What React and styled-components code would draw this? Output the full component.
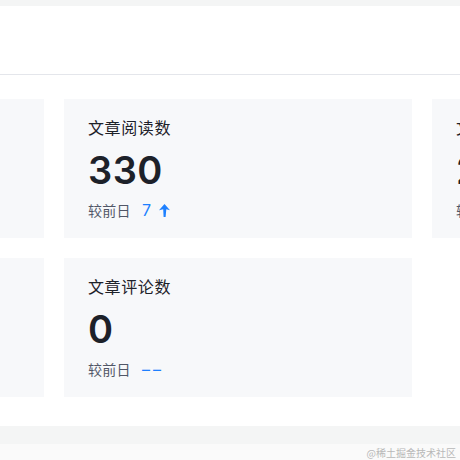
import React from "react";
import styled, { createGlobalStyle } from "styled-components";

const Global = createGlobalStyle`
  html, body { margin: 0; padding: 0; background: #ffffff; }
  body { font-family: Inter, "Noto Sans CJK SC", sans-serif; overflow: hidden; }
  * { box-sizing: border-box; }
`;

const Page = styled.div`
  width: 460px;
  height: 460px;
  display: flex;
  flex-direction: column;
  overflow: hidden;
  background: #ffffff;
`;

const TopStrip = styled.div`
  height: 6px;
  background: #f4f5f5;
  flex-shrink: 0;
`;

const Header = styled.div`
  height: 69px;
  flex-shrink: 0;
  background: #ffffff;
  border-bottom: 1px solid #e4e6eb;
`;

const Viewport = styled.div`
  flex: 1;
  min-height: 0;
  overflow: hidden;
  padding-top: 24px;
`;

const Grid = styled.div`
  display: grid;
  grid-template-columns: repeat(3, 348px);
  column-gap: 20px;
  row-gap: 20px;
  margin-left: -304px;
  width: max-content;
`;

const Card = styled.div`
  background: #f7f8fa;
  height: 139px;
  padding: 16px 24px 17px;
  display: flex;
  flex-direction: column;
`;

const Title = styled.div`
  font-family: "Noto Sans CJK SC", sans-serif;
  font-size: 16px;
  line-height: 24px;
  color: #1d2129;
  letter-spacing: 0.6px;
  white-space: nowrap;
`;

const Value = styled.div`
  margin-top: 8px;
  font-family: Inter, "Noto Sans CJK SC", sans-serif;
  font-size: 38px;
  font-weight: 600;
  line-height: 46px;
  color: #1d2129;
  letter-spacing: 0.5px;
`;

const Sub = styled.div`
  margin-top: 6px;
  height: 22px;
  display: flex;
  align-items: center;
  white-space: nowrap;
`;

const SubLabel = styled.span`
  font-family: "Noto Sans CJK SC", sans-serif;
  font-size: 14px;
  line-height: 22px;
  color: #515767;
  letter-spacing: 0.3px;
`;

const Delta = styled.span`
  margin-left: 11px;
  font-family: Inter, sans-serif;
  font-size: 16px;
  line-height: 22px;
  color: #1e80ff;
  letter-spacing: ${(p) => (p.$dash ? "3px" : "0")};
`;

const Arrow = styled.svg`
  margin-left: 8px;
  width: 11px;
  height: 13px;
  color: #1e80ff;
`;

const Footer = styled.div`
  height: 18px;
  background: #f4f5f5;
  flex-shrink: 0;
`;

const Watermark = styled.div`
  height: 16px;
  background: #fafafa;
  flex-shrink: 0;
  display: flex;
  justify-content: flex-end;
  align-items: center;
  padding-right: 4px;
  font-family: "Noto Sans CJK SC", sans-serif;
  font-size: 10px;
  color: #b8b8b8;
`;

const UpArrow = () => (
  <Arrow viewBox="0 0 11 13" aria-hidden="true">
    <path d="M5.5 0 L11 6.2 L7.3 5.2 L6.6 13 L4.6 13 L4.2 5.2 L0 6.2 Z" fill="currentColor" />
  </Arrow>
);

const stats = [
  { title: "文章展现数", value: "0", delta: "--" },
  { title: "文章阅读数", value: "330", delta: "7", up: true },
  { title: "文章点赞数", value: "2", delta: "--" },
  { title: "文章收藏数", value: "0", delta: "--" },
  { title: "文章评论数", value: "0", delta: "--" },
];

export default function App() {
  return (
    <>
      <Global />
      <Page>
        <TopStrip />
        <Header />
        <Viewport>
          <Grid>
            {stats.map((s) => (
              <Card key={s.title}>
                <Title>{s.title}</Title>
                <Value>{s.value}</Value>
                <Sub>
                  <SubLabel>较前日</SubLabel>
                  <Delta $dash={s.delta === "--"}>{s.delta === "--" ? "––" : s.delta}</Delta>
                  {s.up && <UpArrow />}
                </Sub>
              </Card>
            ))}
          </Grid>
        </Viewport>
        <Footer />
        <Watermark>@稀土掘金技术社区</Watermark>
      </Page>
    </>
  );
}
